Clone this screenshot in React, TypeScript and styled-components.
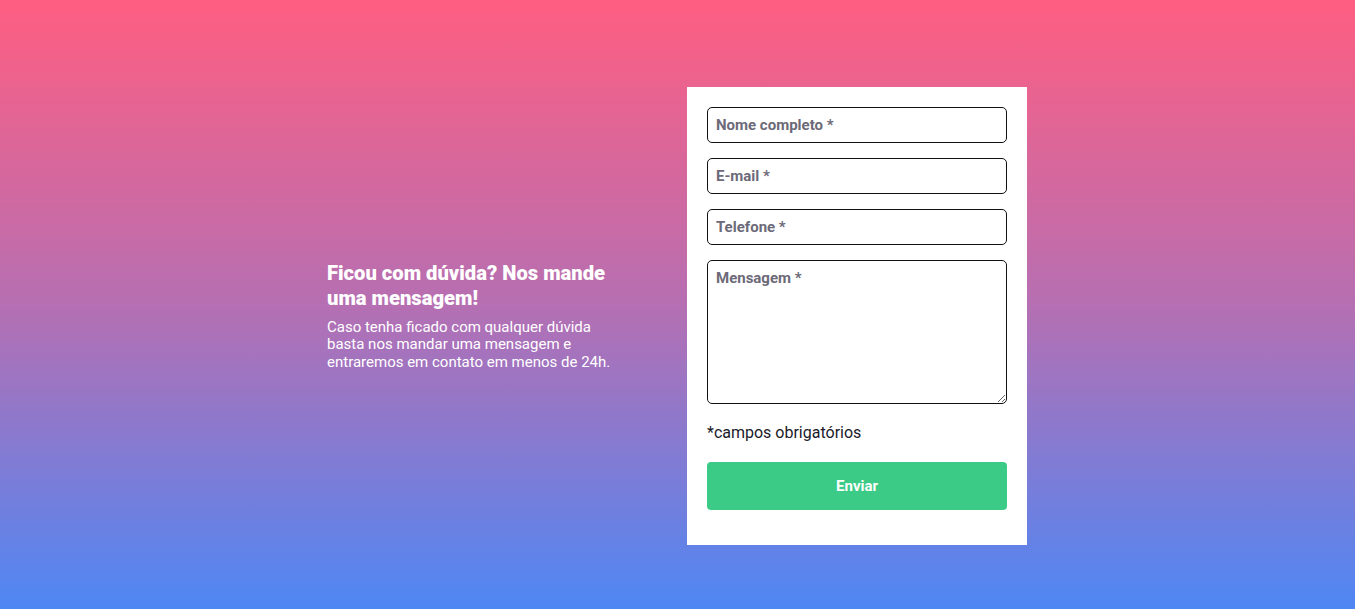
import React from "react";
import styled, { createGlobalStyle } from "styled-components";

const Global = createGlobalStyle`
  html, body { margin: 0; padding: 0; }
  body {
    font-family: Roboto, "Liberation Sans", sans-serif;
    background: linear-gradient(to bottom, #ff5e81 0%, #b66fb2 50%, #4e87f4 100%);
    min-height: 100vh;
  }
  * { box-sizing: border-box; }
`;

const Page = styled.main`
  min-height: 609px;
  padding-top: 23px;
  padding-right: 1px;
  display: flex;
  align-items: center;
  justify-content: center;
  gap: 60px;
  background: linear-gradient(to bottom, #ff5e81 0%, #b66fb2 50%, #4e87f4 100%);
`;

const Intro = styled.section`
  width: 300px;
  color: #fff;
  display: flex;
  flex-direction: column;
  gap: 8px;
`;

const Title = styled.h2`
  margin: 0;
  font-size: 20.2px;
  line-height: 25px;
  font-weight: 900;
`;

const Text = styled.p`
  margin: 0;
  font-size: 15px;
  line-height: 17.5px;
  font-weight: 400;
`;

const Card = styled.form`
  width: 340px;
  background: #fff;
  padding: 20px 20px 35px;
  display: flex;
  flex-direction: column;
  gap: 15px;
`;

const Field = styled.input`
  width: 100%;
  height: 36px;
  border: 1px solid #111;
  border-radius: 5px;
  padding: 0 8px;
  font-family: Roboto, "Liberation Sans", sans-serif;
  font-size: 15px;
  font-weight: 700;
  color: #333;
  outline: none;
  &::placeholder { color: #6c6a78; opacity: 1; }
`;

const Area = styled.textarea`
  width: 100%;
  height: 144px;
  border: 1px solid #111;
  border-radius: 5px;
  padding: 8px 8px;
  font-family: Roboto, "Liberation Sans", sans-serif;
  font-size: 15px;
  font-weight: 700;
  color: #333;
  outline: none;
  resize: vertical;
  display: block;
  &::placeholder { color: #6c6a78; opacity: 1; }
`;

const Note = styled.p`
  margin: 4px 0 0;
  font-size: 16px;
  line-height: 19px;
  color: #1a1a2a;
`;

const Submit = styled.button`
  margin-top: 5px;
  height: 48px;
  width: 100%;
  border: none;
  border-radius: 4px;
  background: #3bcb87;
  color: #fff;
  font-family: Roboto, "Liberation Sans", sans-serif;
  font-size: 15px;
  font-weight: 700;
  cursor: pointer;
`;

export default function App() {
  return (
    <>
      <Global />
      <Page>
        <Intro>
          <Title>Ficou com dúvida? Nos mande uma mensagem!</Title>
          <Text>
            Caso tenha ficado com qualquer dúvida basta nos mandar uma mensagem e
            entraremos em contato em menos de 24h.
          </Text>
        </Intro>
        <Card onSubmit={(e) => e.preventDefault()}>
          <Field placeholder="Nome completo *" />
          <Field placeholder="E-mail *" />
          <Field placeholder="Telefone *" />
          <Area placeholder="Mensagem *" />
          <Note>*campos obrigatórios</Note>
          <Submit type="submit">Enviar</Submit>
        </Card>
      </Page>
    </>
  );
}
